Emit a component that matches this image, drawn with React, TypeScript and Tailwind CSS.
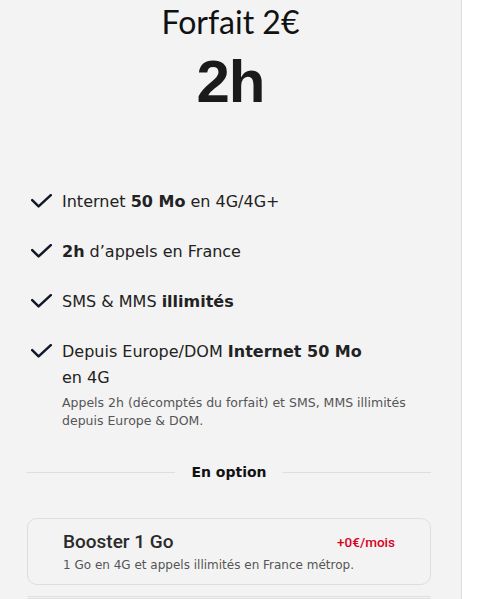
import React from "react";

const Check = () => (
  <svg width="21" height="14" viewBox="0 0 21 14" className="shrink-0 mt-[5px]" fill="none">
    <path d="M1.2 6.2 L7.6 12.4 L19.8 1.2" stroke="#111827" strokeWidth="2.5" strokeLinecap="round" strokeLinejoin="round" />
  </svg>
);

export default function App() {
  const body = { fontFamily: '"DejaVu Sans", "Noto Sans", sans-serif' };
  const rb = { fontFamily: 'Roboto, "Noto Sans", sans-serif' };
  return (
    <div className="w-[480px] h-[599px] bg-white flex overflow-hidden" style={body}>
      <div className="w-[462px] h-full bg-[#f3f3f3] border-r border-[#dcdcdc] flex flex-col overflow-hidden">
        <div className="flex flex-col items-center">
          <div className="text-[32px] leading-[36px] text-[#111] mt-[4px]" style={{ fontFamily: 'Lato, sans-serif' }}>Forfait 2€</div>
          <div className="text-[60px] leading-[64px] font-bold text-[#1a1a1a] mt-[10px] tracking-[-1px]" style={{ fontFamily: '"Liberation Sans", Arial, sans-serif' }}>2h</div>
        </div>
        <ul className="mt-[75px] pl-[31px] pr-[30px] flex flex-col gap-[24px] text-[16px] leading-[26px] text-[#222]">
          <li className="flex gap-[10px]"><Check /><span>Internet <b className="font-bold">50 Mo</b> en 4G/4G+</span></li>
          <li className="flex gap-[10px]"><Check /><span><b className="font-bold">2h</b> d’appels en France</span></li>
          <li className="flex gap-[10px]"><Check /><span>SMS &amp; MMS <b className="font-bold">illimités</b></span></li>
          <li className="flex gap-[10px]"><Check />
            <div>
              <div>Depuis Europe/DOM <b className="font-bold">Internet 50 Mo</b><br />en 4G</div>
              <div className="text-[12.5px] leading-[18px] text-[#555] mt-[3px]">Appels 2h (décomptés du forfait) et SMS, MMS illimités depuis Europe &amp; DOM.</div>
            </div>
          </li>
        </ul>
        <div className="mx-[27px] w-[404px] mt-[32px] flex items-center gap-[16px]">
          <div className="flex-1 h-px bg-[#dedede]" />
          <div className="text-[14px] font-bold text-[#111]">En option</div>
          <div className="flex-1 h-px bg-[#dedede]" />
        </div>
        <div className="mx-[27px] w-[404px] mt-[35px] rounded-[10px] border border-[#dedede] pl-[35px] pr-[35px] pt-[11px] pb-[10px]">
          <div className="flex items-center justify-between">
            <div className="text-[19px] leading-[24px] font-medium text-[#2a2a2a]" style={rb}>Booster 1 Go</div>
            <div className="text-[13.5px] font-medium text-[#d9001b]" style={rb}>+0€/mois</div>
          </div>
          <div className="text-[12px] text-[#555] mt-[2px]">1 Go en 4G et appels illimités en France métrop.</div>
        </div>
        <div className="mx-[27px] w-[404px] mt-[11px] h-[60px] rounded-[10px] border border-[#dedede]" />
      </div>
    </div>
  );
}
